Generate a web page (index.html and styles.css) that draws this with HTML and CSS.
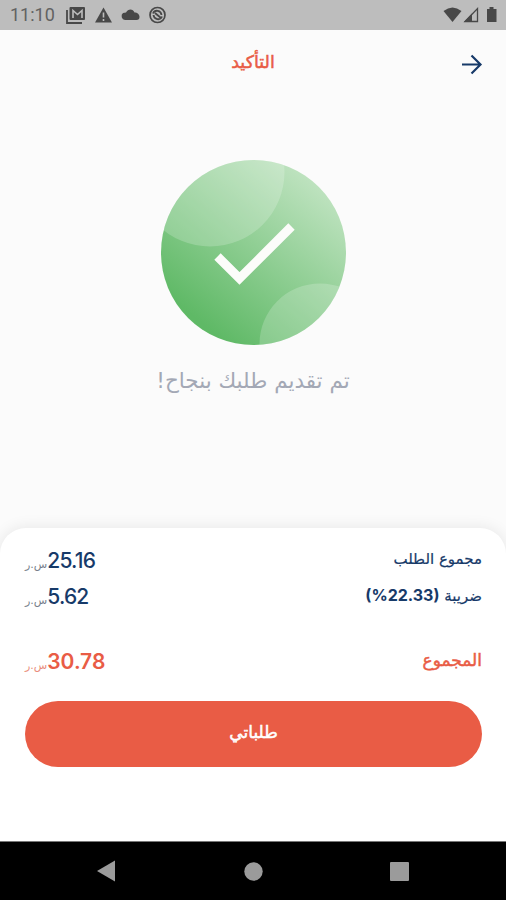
FILE: index.html
```html
<!DOCTYPE html>
<html lang="ar" dir="rtl">
<head>
<meta charset="UTF-8">
<meta name="viewport" content="width=device-width, initial-scale=1.0">
<title>التأكيد</title>
<link rel="stylesheet" href="styles.css">
</head>
<body>

<div class="status-bar" dir="ltr">
  <span class="clock">11:10</span>
  <svg class="status-left" width="104" height="20" viewBox="0 0 104 20">
    <path d="M1 5v13h15" fill="none" stroke="#484848" stroke-width="1.8"/>
    <rect x="3.5" y="2" width="15.500" height="13" rx="1" fill="#484848"/>
    <path d="M7 13V5.500l4.500 4 4.500-4V13" fill="none" stroke="#bdbdbd" stroke-width="1.6"/>
    <path d="M29 17.500L37.500 2.500 46 17.500z" fill="#484848"/>
    <path d="M37.500 7.500v5M37.500 14v2" stroke="#bdbdbd" stroke-width="1.6"/>
    <path d="M59 15.500a4 4 0 0 1-2-7l3-.5c2-4 7-4 8.500 0 3 0 5 2 5 4.500 0 2-1 3-3 3z" fill="#484848" transform="translate(0 -.5)"/>
    <circle cx="91.500" cy="10" r="7.500" fill="none" stroke="#484848" stroke-width="1.700"/>
    <path d="M87 8.500c2-4.500 8-3 8.500 1.500M96 11.500c-2 4.500-8 3-8.500-1.500M89 8l6 5" fill="none" stroke="#484848" stroke-width="1.800"/>
  </svg>
  <svg class="status-right" width="56" height="20" viewBox="0 0 56 20">
    <path d="M1.500 6Q10.500 -1 19.500 6L10.500 17z" fill="#484848"/>
    <path d="M23 16.500L35.500 3.500v13z" fill="none" stroke="#484848" stroke-width="1.300"/>
    <path d="M22 17l8-8.500V17z" fill="#484848"/>
    <path d="M45 4h2.500V2h4v2H54.500v13H45z" fill="#484848"/>
  </svg>
</div>

<header>
  <svg class="back" width="22" height="22" viewBox="0 0 22 22">
    <path d="M1 11.500h18M10.500 2.500l9 9-9 9" fill="none" stroke="#173a69" stroke-width="2.200"/>
  </svg>
  <h1>التأكيد</h1>
</header>

<main>
  <svg class="success" width="186" height="186" viewBox="0 0 186 186">
    <defs>
      <linearGradient id="green" x1="0.230" y1="0.880" x2="0.850" y2="0.120">
        <stop offset="0" stop-color="#5fb966"/>
        <stop offset="1" stop-color="#bfe3c0"/>
      </linearGradient>
      <clipPath id="disc"><circle cx="93.500" cy="92.500" r="92.500"/></clipPath>
    </defs>
    <g clip-path="url(#disc)">
      <rect width="186" height="186" fill="url(#green)"/>
      <circle cx="50" cy="12" r="74.500" fill="#fff" opacity=".2"/>
      <circle cx="160" cy="184" r="60.500" fill="#fff" opacity=".2"/>
    </g>
    <path d="M57.500 96.500l22 22L131.500 66.500" fill="none" stroke="#fcfcfa" stroke-width="9"/>
  </svg>
  <p class="message">تم تقديم طلبك بنجاح!</p>
</main>

<section class="summary">
  <div class="row">
    <span class="label">مجموع الطلب</span>
    <span class="price"><b>25.16</b><small>س.ر</small></span>
  </div>
  <div class="row">
    <span class="label">ضريبة <bdi class="rate" dir="ltr">(%22.33)</bdi></span>
    <span class="price"><b>5.62</b><small>س.ر</small></span>
  </div>
  <div class="row total">
    <span class="label">المجموع</span>
    <span class="price"><b>30.78</b><small>س.ر</small></span>
  </div>
  <button class="orders-btn">طلباتي</button>
</section>

<nav class="nav-bar" dir="ltr">
  <svg width="19" height="22" viewBox="0 0 19 22"><path d="M0 11L18 .5v21z" fill="#9b9b9b"/></svg>
  <svg width="19" height="19" viewBox="0 0 19 19"><circle cx="9.500" cy="9.500" r="9.200" fill="#9b9b9b"/></svg>
  <svg width="19" height="19" viewBox="0 0 19 19"><rect width="19" height="19" rx="1" fill="#9b9b9b"/></svg>
</nav>

</body>
</html>
```
FILE: styles.css
```css
* {
  box-sizing: border-box;
}
body {
  margin: 0;
  height: 900px;
  display: flex;
  flex-direction: column;
  overflow: hidden;
  background-color: #fbfbfb;
  color: #173a69;
  font-family: "DejaVu Sans", sans-serif;
}
.status-bar {
  height: 30px;
  flex: none;
  display: flex;
  align-items: center;
  padding: 0 8px 0 10px;
  background-color: #bdbdbd;
}
.clock {
  width: 56px;
  font: 18px/32px Roboto, sans-serif;
  color: #626262;
}
.status-right {
  margin-left: auto;
}
header {
  height: 68px;
  flex: none;
  display: grid;
  grid-template-columns: 24px 1fr 24px;
  align-items: center;
  padding: 0 23px;
}
h1 {
  margin: 0;
  padding-bottom: 4px;
  text-align: center;
  font-size: 17.5px;
  line-height: 28px;
  font-weight: normal;
  color: #e95c45;
  -webkit-text-stroke: 0.5px;
}
main {
  flex: 1;
  display: flex;
  flex-direction: column;
  align-items: center;
  padding-top: 62px;
}
.message {
  margin: 17px 0 0;
  font-size: 21.5px;
  line-height: 36px;
  color: #a3a8b5;
}
.summary {
  height: 313px;
  flex: none;
  padding: 13px 24px 0 25px;
  background-color: #fff;
  border-radius: 26px 26px 0 0;
  box-shadow: 0 0 16px rgba(0, 0, 0, 0.09);
}
.row {
  height: 36px;
  display: flex;
  justify-content: space-between;
  align-items: center;
}
.label {
  font-size: 15px;
  -webkit-text-stroke: 0.2px;
}
.rate {
  font: bold 16px Inter, sans-serif;
  -webkit-text-stroke: 0;
}
.price {
  display: flex;
  align-items: baseline;
  padding-top: 2px;
}
.price b {
  font: 500 21px Inter, sans-serif;
  letter-spacing: -0.8px;
}
.price small {
  font-size: 11px;
  color: #777f8c;
}
.total {
  margin-top: 29px;
  color: #e95c45;
}
.total .label {
  font-size: 17px;
  -webkit-text-stroke: 0.5px;
}
.total .price b {
  font-weight: 600;
  letter-spacing: 0;
}
.total .price small {
  color: #e98d7d;
}
.orders-btn {
  display: block;
  width: 100%;
  height: 66px;
  margin-top: 23px;
  padding: 0 0 4px;
  border: none;
  border-radius: 33px;
  background-color: #e95c45;
  color: #fff;
  font-family: inherit;
  font-size: 17px;
  -webkit-text-stroke: 0.5px;
}
.nav-bar {
  height: 59px;
  flex: none;
  display: flex;
  justify-content: space-between;
  align-items: center;
  padding: 0 97px;
  background-color: #000;
  border-top: 1px solid #777;
}
```
